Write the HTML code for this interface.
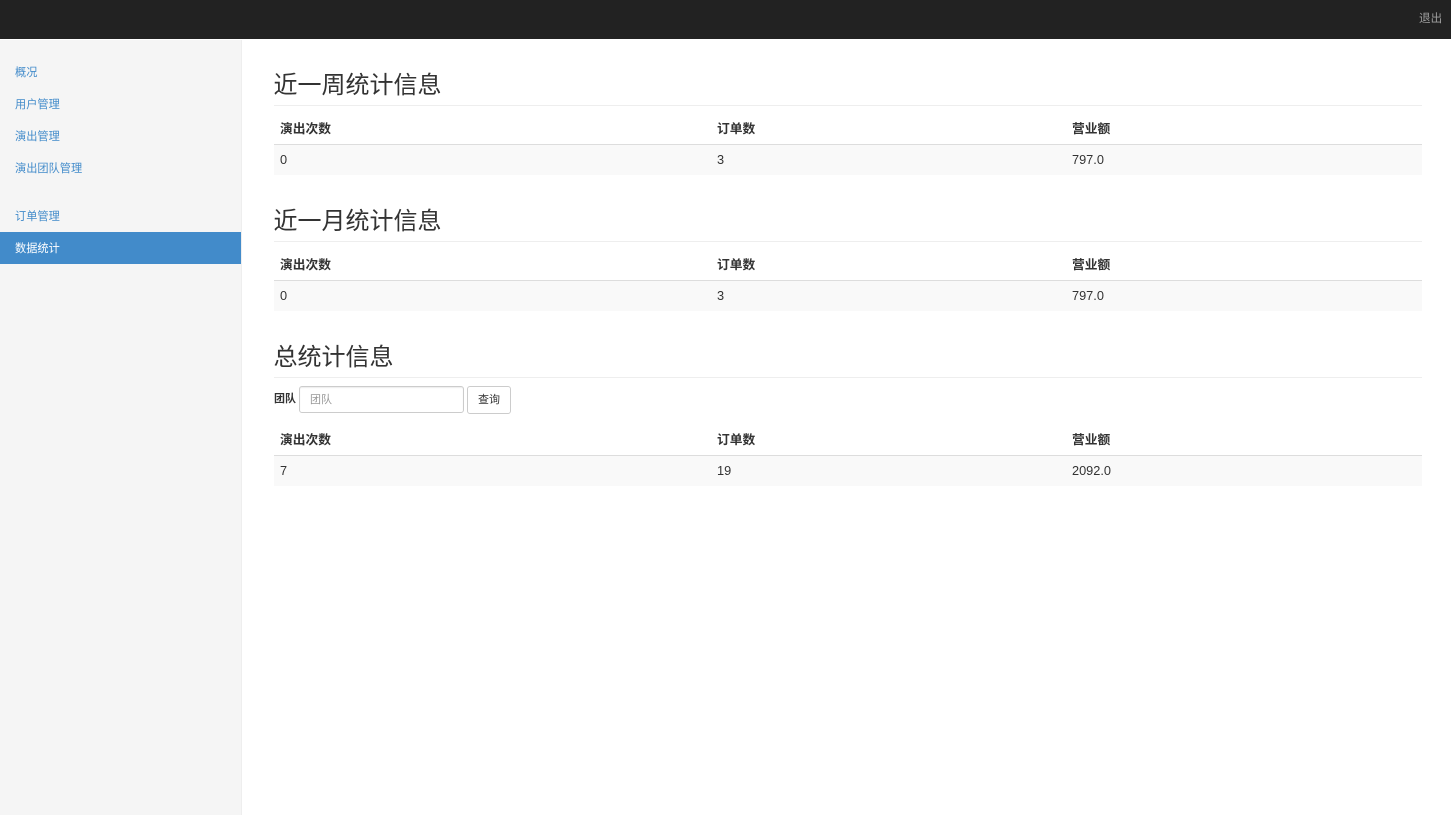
<!DOCTYPE html>
<html lang="zh"><head><meta charset="utf-8"><title>数据统计</title>
<style>
html,body{margin:0;padding:0;width:1451px;height:815px;overflow:hidden;background:#fff}
body{font-family:"Liberation Sans","Noto Sans CJK SC",sans-serif;color:#333;position:relative}
div,span,h2{position:absolute;margin:0;white-space:nowrap}
.nav{left:15px;font-size:11.2px;line-height:16px;color:#428bca}
h2{left:273.5px;font-size:24px;font-weight:400;line-height:32px;color:#333}
.hr{left:274px;width:1148px;height:1px;background:#eee}
.th{font-size:12.75px;font-weight:700;line-height:18px;color:#333}
.td{font-size:12.75px;line-height:18px;color:#333}
.l{height:1px;left:274px;width:1148px;background:#ddd}
.st{left:274px;width:1148px;height:30px;background:#f9f9f9}
.c1{left:280px}.c2{left:717px}.c3{left:1072px}
</style></head><body>
<div style="left:0;top:0;width:1451px;height:39px;background:#222"></div>
<div style="left:1419px;top:11px;font-size:11.6px;line-height:16px;color:#9d9d9d">退出</div>
<div style="left:0;top:40px;width:241px;height:775px;background:#f5f5f5;border-right:1px solid #eee"></div>
<div class="nav" style="top:65px">概况</div>
<div class="nav" style="top:97px">用户管理</div>
<div class="nav" style="top:129px">演出管理</div>
<div class="nav" style="top:161px">演出团队管理</div>
<div class="nav" style="top:209px">订单管理</div>
<div style="left:0;top:232px;width:241px;height:32px;background:#428bca"></div>
<div class="nav" style="top:241px;color:#fff">数据统计</div>

<h2 style="top:70px">近一周统计信息</h2>
<div class="hr" style="top:105px"></div>
<div class="th c1" style="top:120px">演出次数</div><div class="th c2" style="top:120px">订单数</div><div class="th c3" style="top:120px">营业额</div>
<div class="st" style="top:145px"></div><div class="l" style="top:144px"></div>
<div class="td c1" style="top:151px">0</div><div class="td c2" style="top:151px">3</div><div class="td c3" style="top:151px">797.0</div>

<h2 style="top:206px">近一月统计信息</h2>
<div class="hr" style="top:241px"></div>
<div class="th c1" style="top:256px">演出次数</div><div class="th c2" style="top:256px">订单数</div><div class="th c3" style="top:256px">营业额</div>
<div class="st" style="top:281px"></div><div class="l" style="top:280px"></div>
<div class="td c1" style="top:287px">0</div><div class="td c2" style="top:287px">3</div><div class="td c3" style="top:287px">797.0</div>

<h2 style="top:342px">总统计信息</h2>
<div class="hr" style="top:377px"></div>
<div style="left:274px;top:391px;font-size:11px;font-weight:700;line-height:16px;color:#333">团队</div>
<div style="left:299px;top:386px;width:163px;height:25px;border:1px solid #ccc;border-radius:3px;background:#fff;box-shadow:inset 0 1px 1px rgba(0,0,0,.075)"></div>
<div style="left:310px;top:392px;font-size:11px;line-height:16px;color:#999">团队</div>
<div style="left:467px;top:386px;width:42px;height:26px;border:1px solid #ccc;border-radius:3px;background:#fff"></div>
<div style="left:478px;top:392px;font-size:11px;line-height:16px;color:#333">查询</div>
<div class="th c1" style="top:431px">演出次数</div><div class="th c2" style="top:431px">订单数</div><div class="th c3" style="top:431px">营业额</div>
<div class="st" style="top:456px"></div><div class="l" style="top:455px"></div>
<div class="td c1" style="top:462px">7</div><div class="td c2" style="top:462px">19</div><div class="td c3" style="top:462px">2092.0</div>
</body></html>
